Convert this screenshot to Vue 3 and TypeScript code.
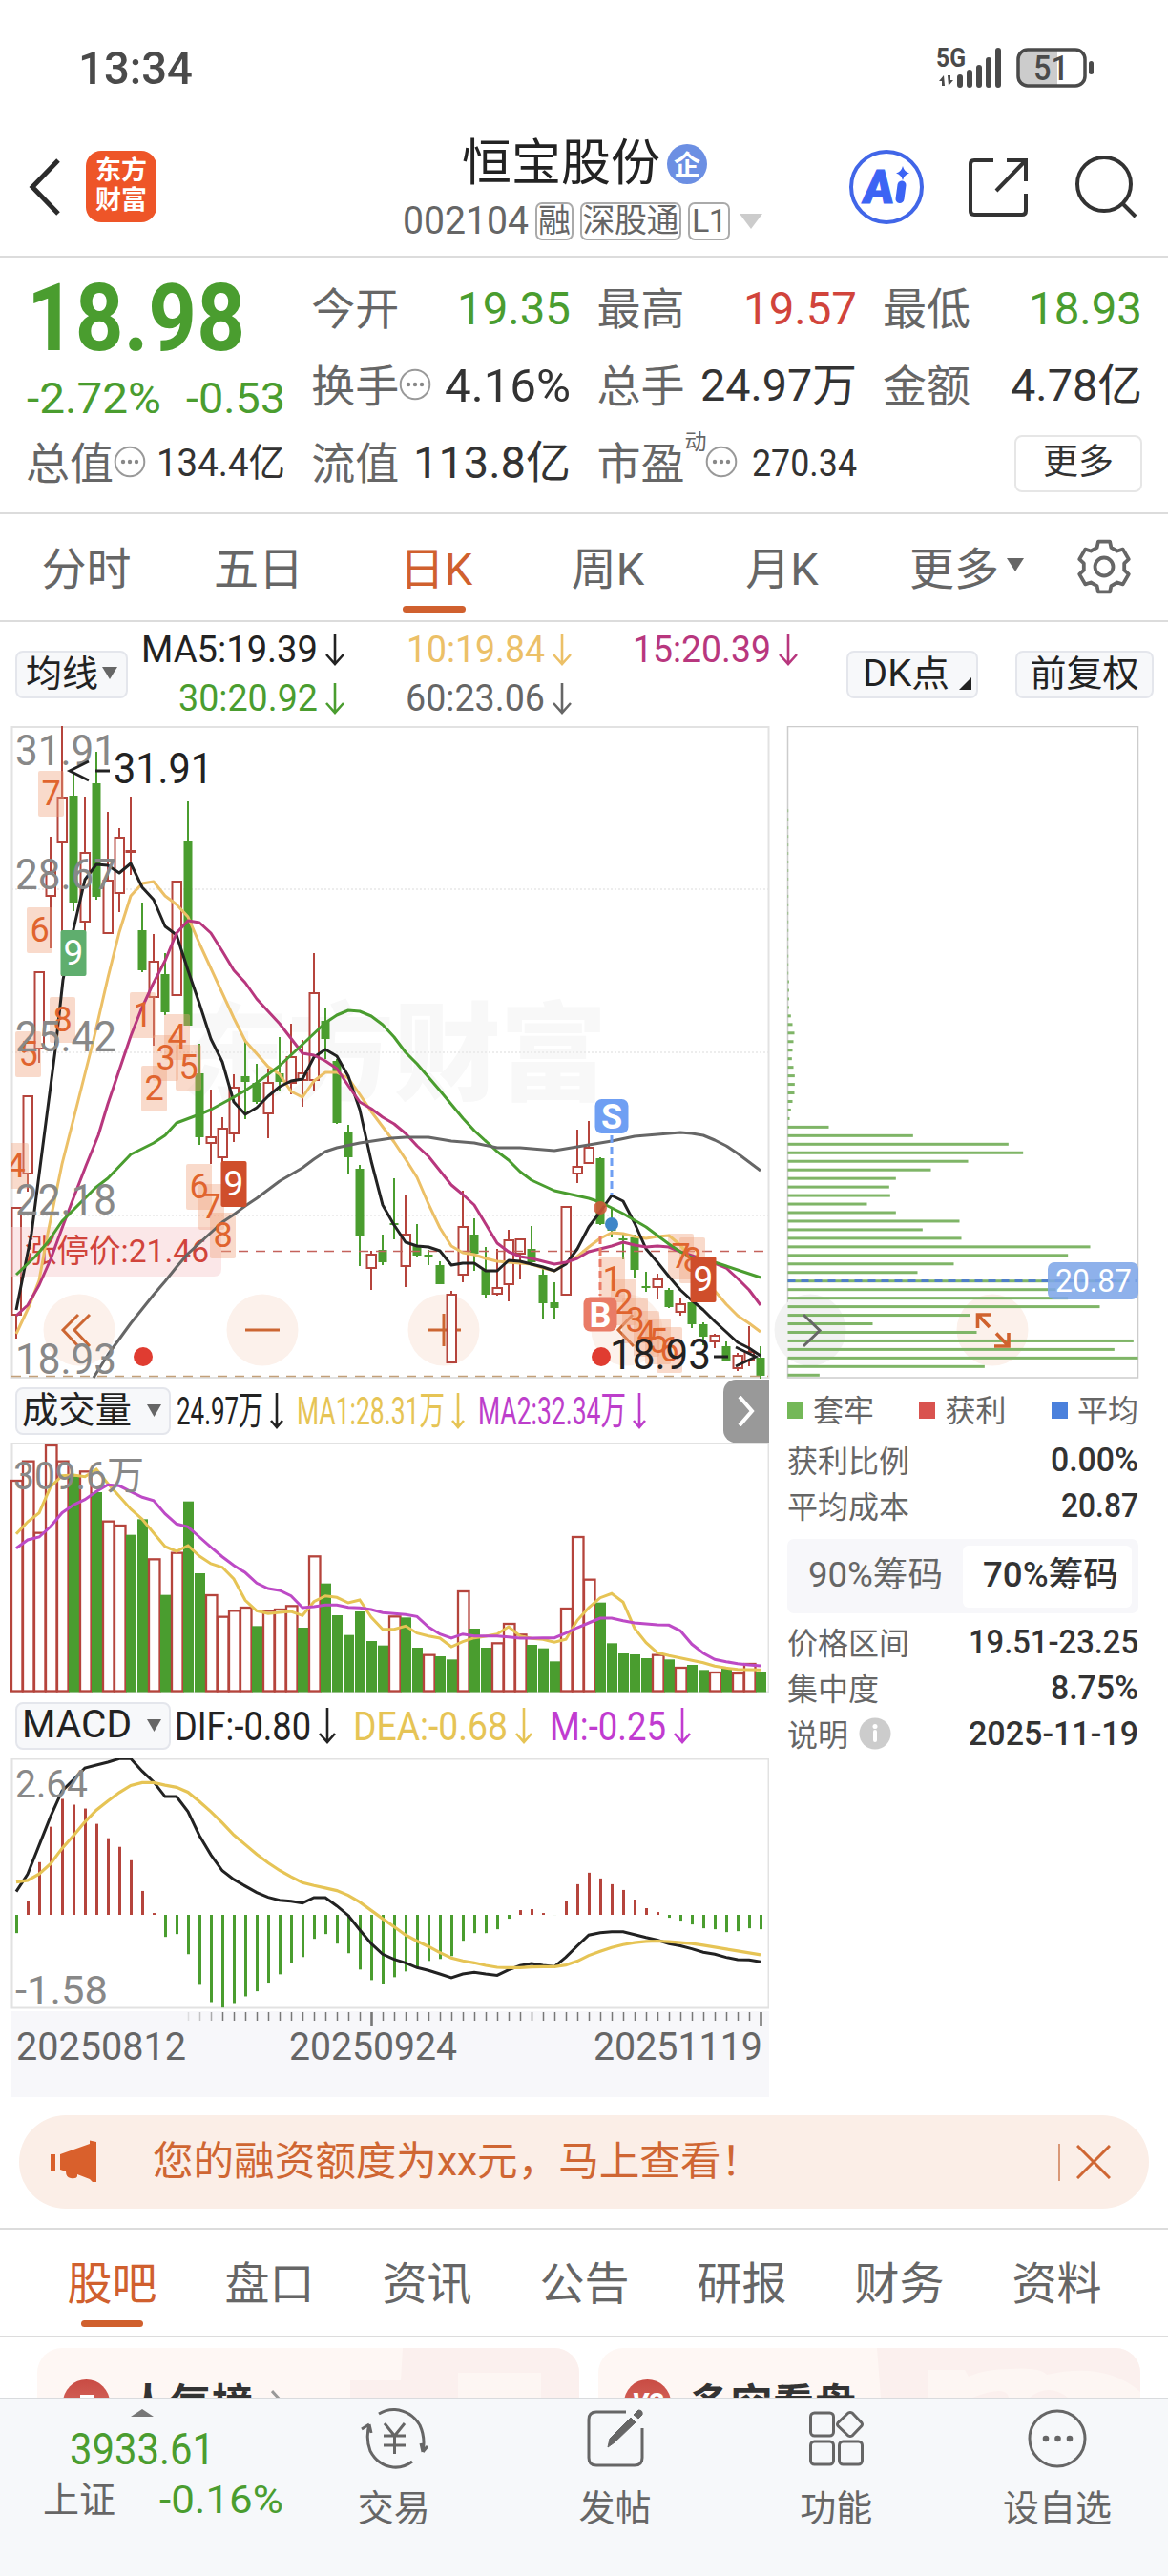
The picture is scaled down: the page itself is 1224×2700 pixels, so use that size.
<script setup lang="ts">
import { h } from 'vue'

const GREEN = '#4a9d2f'
const RED = '#b5443c'
const FONT = 'Roboto, "Noto Sans CJK SC", sans-serif'

interface FitProps { t: string; w: number; s: number; c?: string; b?: number | string }

// Single-line label whose advance width is fixed
const Fit = (p: FitProps) =>
  h('svg', { width: p.w, height: p.s, viewBox: `0 0 ${p.w} ${p.s}`, style: 'display:block;flex:none;overflow:visible' }, [
    h('text', {
      x: 0, y: p.s * 0.855 - 1, 'font-size': p.s, 'font-family': FONT, 'font-weight': p.b ?? 400,
      fill: p.c ?? '#222', textLength: p.w, lengthAdjust: 'spacingAndGlyphs',
    }, p.t),
  ])
Fit.props = ['t', 'w', 's', 'c', 'b']

const Arrow = (p: { c: string; w: number; h: number }) =>
  h('svg', { width: p.w, height: p.h, viewBox: `0 0 ${p.w} ${p.h}`, style: 'display:block;flex:none' }, [
    h('path', {
      d: `M${p.w / 2} 0V${p.h - 2}M1 ${p.h - p.w / 2 - 2}L${p.w / 2} ${p.h - 2}L${p.w - 1} ${p.h - p.w / 2 - 2}`,
      fill: 'none', stroke: p.c, 'stroke-width': 2.6,
    }),
  ])
Arrow.props = ['c', 'w', 'h']

const Dots = () =>
  h('svg', { width: 34, height: 34, viewBox: '0 0 34 34', style: 'display:block;flex:none' }, [
    h('circle', { cx: 17, cy: 17, r: 15.3, fill: 'none', stroke: '#999', 'stroke-width': 2 }),
    ...[10, 17, 24].map((x) => h('circle', { cx: x, cy: 17, r: 2.2, fill: '#888' })),
  ])

const cx = (i: number) => 17 + 12 * i
const pts = (a: number[], f: (v: number) => number) => a.map((v, i) => `${cx(i)},${f(v).toFixed(1)}`).join(' ')

// [up, high, bodyTop, bodyBottom, low]
const candles: number[][] = [
  [1, 1265, 1265, 1379, 1403], [1, 1148, 1148, 1231, 1249], [1, 1018, 1018, 1100, 1114], [1, 877, 913, 940, 994],
  [1, 761, 835, 884, 1023], [0, 810, 834, 946, 955], [1, 835, 893, 967, 976], [0, 788, 821, 940, 943],
  [1, 851, 922, 979, 979], [1, 868, 877, 937, 956], [1, 835, 891, 893, 917], [0, 946, 975, 1017, 1019],
  [1, 979, 1007, 1046, 1096], [0, 999, 1021, 1061, 1064], [1, 923, 923, 1044, 1044], [0, 840, 882, 1075, 1075],
  [0, 1094, 1125, 1192, 1200], [1, 1142, 1191, 1199, 1220], [1, 1171, 1182, 1214, 1218], [1, 1126, 1139, 1189, 1197],
  [0, 1089, 1128, 1134, 1173], [0, 1115, 1135, 1155, 1157], [1, 1120, 1134, 1168, 1193], [0, 1087, 1125, 1134, 1143],
  [1, 1073, 1107, 1136, 1147], [1, 1090, 1124, 1133, 1160], [1, 999, 1040, 1133, 1143], [0, 1057, 1070, 1089, 1110],
  [0, 1110, 1112, 1177, 1178], [0, 1179, 1187, 1213, 1230], [0, 1221, 1225, 1296, 1327], [1, 1311, 1314, 1330, 1352],
  [0, 1294, 1310, 1323, 1326], [0, 1235, 1282, 1284, 1299], [1, 1253, 1293, 1328, 1349], [0, 1283, 1305, 1316, 1318],
  [0, 1310, 1315, 1317, 1326], [0, 1322, 1326, 1346, 1346], [1, 1353, 1356, 1429, 1429], [1, 1248, 1285, 1337, 1344],
  [0, 1277, 1294, 1314, 1332], [0, 1307, 1331, 1357, 1361], [1, 1309, 1349, 1357, 1358], [1, 1289, 1299, 1347, 1364],
  [1, 1298, 1298, 1315, 1341], [0, 1285, 1309, 1323, 1327], [0, 1330, 1336, 1366, 1383], [0, 1344, 1365, 1371, 1382],
  [1, 1264, 1264, 1358, 1358], [1, 1184, 1222, 1231, 1240], [1, 1175, 1202, 1220, 1220], [0, 1213, 1214, 1283, 1284],
  [0, 1266, 1278, 1290, 1297], [0, 1293, 1298, 1300, 1320], [0, 1294, 1297, 1331, 1340], [0, 1333, 1348, 1350, 1354],
  [1, 1335, 1340, 1350, 1362], [0, 1350, 1352, 1370, 1371], [1, 1361, 1366, 1376, 1379], [0, 1365, 1365, 1388, 1392],
  [0, 1386, 1388, 1401, 1410], [1, 1398, 1399, 1407, 1413], [0, 1406, 1411, 1426, 1427], [1, 1418, 1420, 1435, 1437],
  [1, 1390, 1416, 1427, 1432], [0, 1411, 1423, 1442, 1445],
]

const maLines = [
  { c: '#ecc067', p: '17,1398 31,1368 41,1342 50,1293 65,1220 77,1173 98,1090 113,1025 125,977 137,939 149,926 161,924 173,939 185,948 197,961 209,989 221,1015 245,1067 257,1091 273,1109 281,1118 293,1126 305,1144 317,1150 329,1133 341,1124 353,1124 365,1130 377,1147 389,1165 401,1181 413,1197 425,1215 437,1234 449,1262 461,1287 473,1306 485,1313 497,1315 509,1319 521,1322 545,1324 557,1325 569,1329 581,1332 593,1324 605,1317 617,1307 629,1298 641,1292 653,1293 665,1296 677,1298 689,1296 701,1295 713,1305 737,1337 749,1353 761,1367 773,1379 785,1387 797,1396' },
  { c: '#222', p: '17,1373 33,1293 45,1200 58,1100 66,1027 77,974 89,922 101,906 113,907 125,915 137,905 149,930 161,943 173,971 185,980 197,1017 209,1052 221,1089 233,1113 245,1155 257,1168 269,1161 281,1149 293,1139 305,1133 317,1131 329,1108 341,1100 353,1107 365,1128 377,1163 389,1217 401,1263 413,1284 425,1302 437,1306 449,1307 461,1311 473,1326 485,1324 497,1324 509,1332 521,1332 533,1321 545,1322 557,1325 569,1328 581,1332 593,1325 605,1309 617,1286 629,1270 641,1253 653,1259 665,1282 677,1309 689,1323 701,1338 713,1352 725,1363 737,1373 749,1385 761,1396 773,1407 785,1413 797,1421' },
  { c: '#b8377e', p: '17,1379 29,1368 41,1347 53,1320 67,1282 78,1253 90,1222 103,1190 113,1157 137,1086 148,1058 160,1032 173,1007 185,978 197,965 209,967 221,978 233,997 245,1017 257,1030 269,1047 293,1073 317,1104 329,1106 341,1112 353,1120 365,1138 377,1155 389,1162 401,1171 413,1178 425,1188 437,1201 449,1212 461,1227 473,1242 485,1252 497,1263 509,1283 521,1303 533,1312 545,1317 557,1319 581,1325 593,1323 605,1319 617,1312 629,1309 641,1306 653,1302 665,1305 677,1307 689,1306 701,1307 713,1312 749,1324 761,1329 773,1340 785,1352 797,1368' },
  { c: '#4a9d2f', p: '17,1336 37,1317 50,1302 65,1280 100,1245 113,1235 137,1210 161,1198 173,1190 185,1177 209,1168 221,1163 245,1150 257,1143 269,1135 293,1117 322,1090 341,1072 353,1064 365,1059 377,1060 389,1065 401,1074 413,1087 425,1103 437,1115 461,1143 485,1172 497,1185 521,1207 533,1216 545,1228 557,1237 581,1248 617,1256 629,1260 653,1272 677,1286 701,1304 713,1312 725,1318 749,1323 761,1327 797,1339' },
  { c: '#666', p: '98,1444 113,1420 137,1387 161,1357 173,1343 185,1328 197,1314 209,1303 221,1292 233,1281 245,1273 257,1264 269,1256 293,1238 305,1231 317,1224 329,1215 341,1207 353,1203 377,1198 410,1193 425,1192 449,1192 461,1194 473,1196 497,1198 521,1203 545,1203 557,1204 581,1206 593,1204 617,1200 641,1196 665,1191 689,1189 713,1187 725,1188 737,1190 749,1195 761,1201 773,1209 785,1218 797,1227' },
]

// [digit, x, y]
const marks: [string, number, number][] = [
  ['4', 3, 1198], ['5', 16, 1081], ['6', 28, 951], ['7', 40, 808], ['8', 52, 1045], ['1', 136, 1040], ['2', 148, 1117],
  ['3', 160, 1085], ['4', 172, 1063], ['5', 184, 1095], ['6', 195, 1220], ['7', 208, 1241], ['8', 220, 1271],
  ['1', 628, 1317], ['2', 640, 1341], ['3', 652, 1360], ['4', 664, 1374], ['5', 676, 1382], ['6', 688, 1391],
  ['7', 700, 1293], ['8', 712, 1297],
]
const nines = [
  { x: 63.5, y: 975, c: '#5fae6e' }, { x: 231.5, y: 1217, c: '#cf4e2b' }, { x: 723.5, y: 1317, c: '#cf4e2b' },
]
const axis = [['31.91', 802], ['28.67', 932], ['25.42', 1102], ['22.18', 1273], ['18.93', 1440]] as const

const chipEnds = [
  81, 81, 81, 81, 87, 92, 98, 95, 92, 90, 95, 99, 99, 98, 92, 87, 83,
  206, 471, 771, 817, 644, 527, 417, 396, 399, 326, 417, 617, 501, 623, 1028, 958, 599, 485, 1140, 920, 958, 1058, 651, 344, 671, 1164, 1104, 1178, 696, 177,
]
const chips = [...Array(20).fill(79), ...chipEnds].map((v: number, k, a) => ({
  y: 1441.3 - (a.length - 1 - k) * 8.963, w: (v - 77) / 3,
}))

const vTop = [333, 272, 497, 222, 272, 322, 304, 372, 461, 474, 506, 457, 580, 695, 560, 401, 627, 693, 761, 742, 732, 793, 742, 738, 727, 798, 571, 659, 759, 821, 747, 840, 854, 760, 766, 861, 881, 888, 898, 681, 801, 861, 844, 783, 817, 852, 863, 904, 735, 510, 644, 719, 847, 879, 882, 894, 881, 898, 921, 915, 931, 936, 925, 939, 909, 939]
const redVol = new Set([0, 1, 2, 3, 4, 6, 8, 9, 12, 14, 17, 18, 19, 20, 22, 23, 24, 26, 33, 36, 39, 42, 43, 44, 48, 49, 50, 56, 58, 61, 63, 64])
const vols = vTop.map((v, i) => ({ y: 1440 + v / 3, up: redVol.has(i), x: cx(i) }))
const vy = (v: number) => 1440 + v / 3
const vma1 = pts([503, 465, 437, 355, 320, 318, 323, 300, 345, 385, 425, 457, 500, 543, 558, 540, 573, 597, 608, 645, 712, 745, 754, 750, 747, 760, 716, 698, 703, 720, 711, 765, 803, 803, 793, 815, 824, 831, 858, 842, 830, 825, 818, 795, 824, 832, 835, 844, 835, 775, 735, 704, 691, 718, 800, 845, 877, 886, 893, 901, 908, 919, 925, 929, 930, 931], vy)
const vma2 = pts([548, 522, 513, 480, 437, 412, 395, 370, 349, 352, 370, 388, 398, 440, 472, 481, 513, 545, 575, 602, 625, 658, 675, 681, 698, 735, 732, 727, 727, 734, 736, 741, 751, 754, 757, 763, 796, 818, 831, 818, 824, 824, 824, 827, 831, 831, 830, 830, 815, 798, 783, 768, 768, 776, 783, 786, 789, 790, 808, 850, 878, 898, 905, 911, 915, 918], vy)

const my = (v: number) => 1780 + v / 2.986
const macd = [735, 633, 513, 402, 315, 333, 345, 393, 438, 465, 507, 603, 672, 747, 738, 801, 897, 951, 968, 954, 933, 917, 890, 864, 830, 810, 753, 738, 768, 798, 849, 882, 893, 873, 855, 840, 822, 816, 807, 759, 735, 735, 723, 690, 663, 660, 672, 678, 633, 582, 546, 564, 582, 600, 630, 657, 669, 687, 696, 708, 720, 723, 732, 729, 720, 723]
const dif = pts([605, 550, 460, 370, 290, 255, 218, 209, 200, 189, 189, 228, 262, 308, 308, 355, 430, 490, 540, 567, 588, 608, 623, 632, 635, 641, 624, 624, 650, 680, 725, 768, 801, 817, 828, 843, 852, 863, 875, 863, 858, 863, 867, 850, 837, 830, 836, 840, 810, 775, 741, 734, 731, 731, 740, 749, 757, 768, 775, 784, 795, 801, 811, 818, 819, 825], my)
const dea = pts([575, 570, 550, 518, 470, 430, 387, 350, 322, 295, 273, 264, 264, 272, 279, 294, 323, 355, 390, 428, 458, 488, 515, 539, 559, 577, 586, 594, 602, 617, 638, 664, 690, 715, 741, 760, 777, 796, 813, 822, 828, 836, 842, 843, 843, 841, 840, 840, 835, 823, 805, 792, 780, 771, 765, 761, 760, 762, 765, 768, 773, 779, 785, 791, 797, 803], my)
const ticks = Array.from({ length: 51 }, (_, k) => k + 15)

const gear = (() => {
  const p: string[] = []
  for (let k = 0; k < 6; k++) {
    for (const [d, r] of [[-13, 27], [13, 27], [20, 21.5], [40, 21.5]]) {
      const a = ((-90 + 60 * k + d) * Math.PI) / 180
      p.push(`${(30 + r * Math.cos(a)).toFixed(1)},${(30 + r * Math.sin(a)).toFixed(1)}`)
    }
  }
  return p.join(' ')
})()

const periods = ['分时', '五日', '日K', '周K', '月K']
const sections = ['股吧', '盘口', '资讯', '公告', '研报', '财务', '资料']
const mas = [
  { t: 'MA5:19.39', w: 185, c: '#222' }, { t: '10:19.84', w: 145, c: '#ecc067' }, { t: '15:20.39', w: 145, c: '#b8377e' },
  { t: '30:20.92', w: 146, c: '#4a9d2f' }, { t: '60:23.06', w: 146, c: '#666' },
]
</script>

<template>
  <div class="page">
    <div class="status">
      <Fit t="13:34" :w="120" :s="49" c="#4a4a4a" :b="500" />
      <svg width="168" height="46" viewBox="980 48 168 46">
        <text x="981" y="70" font-size="28" font-weight="700" textLength="31" lengthAdjust="spacingAndGlyphs" fill="#4a4a4a" class="num">5G</text>
        <path d="M989 79l-5 6h3v5h3zM994 90l5-6h-3v-5h-3z" fill="#4a4a4a" />
        <path d="M1006 81v8M1016 76v13M1026 71v18M1036 63v26M1046 53v36" stroke="#4a4a4a" stroke-width="6" stroke-linecap="round" />
        <path d="M1075 52h33v38h-33q-9 0-9-9v-20q0-9 9-9z" fill="#ccc" />
        <rect x="1067" y="52" width="70" height="38" rx="10" fill="none" stroke="#4a4a4a" stroke-width="3.5" />
        <rect x="1141" y="64" width="5" height="14" rx="2.5" fill="#4a4a4a" />
        <text x="1083" y="84" font-size="37" font-weight="500" textLength="37" lengthAdjust="spacingAndGlyphs" fill="#4a4a4a" class="num">51</text>
      </svg>
    </div>

    <header class="top">
      <svg class="back" width="40" height="64" viewBox="0 0 40 64"><path d="M33 4L6 32L33 60" fill="none" stroke="#2b2b2b" stroke-width="5" /></svg>
      <div class="logo"><span>东方</span><span>财富</span></div>
      <div class="title">
        <div class="name">恒宝股份<i>企</i></div>
        <div class="code">
          <Fit t="002104" :w="132" :s="41" c="#666" />
          <b>融</b><b>深股通</b><b>L1</b>
          <svg width="24" height="16" viewBox="0 0 24 16"><path d="M0 0h24L12 16z" fill="#ccc" /></svg>
        </div>
      </div>
      <svg class="acts" width="310" height="80" viewBox="886 156 310 80">
        <circle cx="929" cy="196" r="37" fill="#fff" stroke="#4166e8" stroke-width="4" />
        <text transform="translate(903 213) skewX(-6)" font-size="49" font-weight="900" fill="#3c64f4" stroke="#3c64f4" stroke-width="1.2" textLength="32" lengthAdjust="spacingAndGlyphs" class="num">A</text>
        <path d="M945 194l-2 14.500" stroke="#3c64f4" stroke-width="9" stroke-linecap="round" />
        <path d="M946 174q1.500 6 7 7.500q-5.500 1.500-7 7.500q-1.500-6-7-7.500q5.500-1.500 7-7.500z" fill="#3c64f4" />
        <path d="M1041 168h-20q-4 0-4 4v49q0 4 4 4h50q4 0 4-4v-18M1055 168h20v22M1075 168L1044 200" fill="none" stroke="#333" stroke-width="4" />
        <circle cx="1157" cy="193" r="28" fill="none" stroke="#333" stroke-width="4" />
        <path d="M1176 213l14 14" stroke="#333" stroke-width="4" />
      </svg>
    </header>

    <section class="quote">
      <div class="last">
        <div class="big"><Fit t="18.98" :w="229" :s="99" :c="GREEN" :b="700" /></div>
        <div class="chg"><Fit t="-2.72%" :w="141" :s="44" :c="GREEN" /><Fit t="-0.53" :w="104" :s="44" :c="GREEN" /></div>
      </div>
      <div class="cell"><span>今开</span><Fit t="19.35" :w="119" :s="48" :c="GREEN" /></div>
      <div class="cell"><span>最高</span><Fit t="19.57" :w="119" :s="48" c="#d1443b" /></div>
      <div class="cell"><span>最低</span><Fit t="18.93" :w="119" :s="48" :c="GREEN" /></div>
      <div class="cell"><span>换手</span><Dots class="dots" /><Fit t="4.16%" :w="132" :s="48" c="#333" /></div>
      <div class="cell"><span>总手</span><Fit t="24.97万" :w="164" :s="47" c="#333" /></div>
      <div class="cell"><span>金额</span><Fit t="4.78亿" :w="138" :s="47" c="#333" /></div>
      <div class="cell"><span>总值</span><Dots class="dots" /><Fit t="134.4亿" :w="135" :s="40" c="#333" /></div>
      <div class="cell"><span>流值</span><Fit t="113.8亿" :w="165" :s="47" c="#333" /></div>
      <div class="cell"><span>市盈</span><small>动</small><Dots class="dots" /><Fit t="270.34" :w="110" :s="38" c="#333" /></div>
      <div class="cell"><div class="more">更多</div></div>
    </section>

    <nav class="periods">
      <div v-for="p in periods" :key="p" :class="{ on: p === '日K' }">{{ p }}</div>
      <div>更多<svg width="18" height="14" viewBox="0 0 18 14"><path d="M0 0h18L9 14z" fill="#666" /></svg></div>
      <div>
        <svg width="60" height="60" viewBox="0 0 60 60" fill="none" stroke="#666" stroke-width="3.8" stroke-linejoin="round">
          <polygon :points="gear" /><circle cx="30" cy="30" r="9.500" />
        </svg>
      </div>
    </nav>

    <div class="maRow">
      <div class="pill a">均线<svg width="16" height="13" viewBox="0 0 16 13"><path d="M0 0h16L8 13z" fill="#666" /></svg></div>
      <div class="mas">
        <div v-for="m in mas" :key="m.t"><Fit :t="m.t" :w="m.w" :s="39" :c="m.c" /><Arrow :c="m.c" :w="20" :h="33" /></div>
      </div>
      <div class="pill b"><Fit t="DK点" :w="91" :s="38" /><svg width="13" height="13" viewBox="0 0 13 13"><path d="M13 0v13H0z" fill="#222" /></svg></div>
      <div class="pill c">前复权</div>
    </div>

    <svg class="chart num" width="1224" height="685" viewBox="0 761 1224 685">
      <defs><clipPath id="kc"><rect x="12" y="761" width="794" height="685" /></clipPath></defs>
      <text x="190" y="1145" font-size="112" font-weight="900" fill="#f8f8f8" textLength="446">东方财富</text>
      <g fill="none" stroke="#e8e8e8" stroke-width="1.500" stroke-dasharray="2 2"><path d="M12 932H805M12 1103H805M12 1274H805" /></g>
      <rect x="12.500" y="762" width="793" height="682" fill="none" stroke="#e2e2e2" stroke-width="2" />
      <g fill="#fcf1eb"><circle v-for="x in [83, 275, 465, 657]" :key="x" :cx="x" cy="1394" r="37.500" /></g>
      <g fill="none" stroke="#cc6632" stroke-width="3">
        <path d="M82 1378L66 1394L82 1411M94 1378L78 1394L94 1411M257 1394H293M448 1394H483M465 1377V1411M663 1378L648 1394L664 1411" />
      </g>
      <g clip-path="url(#kc)">
        <g v-for="(k, i) in candles" :key="i">
          <template v-if="k[0]">
            <path :d="`M${cx(i)} ${k[1]}V${k[2]}M${cx(i)} ${k[3]}V${k[4]}`" :stroke="RED" stroke-width="2" />
            <rect :x="cx(i) - 4.500" :y="k[2] + 1" width="9.500" :height="Math.max(1, k[3] - k[2] - 2)" fill="#fff" :stroke="RED" stroke-width="2" />
          </template>
          <template v-else>
            <path :d="`M${cx(i)} ${k[1]}V${k[4]}`" :stroke="GREEN" stroke-width="2" />
            <rect :x="cx(i) - 4.500" :y="k[2]" width="9" :height="k[3] - k[2]" :fill="GREEN" />
          </template>
        </g>
        <path d="M12 1286H224q8 0 8 8v36q0 8-8 8H12z" fill="#f6c9cd" opacity="0.45" />
        <path d="M232 1311.500H805" stroke="#c4625b" stroke-width="1.500" stroke-dasharray="10 8" />
        <path d="M12 1442.500H805" stroke="#c3a079" stroke-width="1.500" stroke-dasharray="10 8" />
        <text x="26" y="1323" font-size="34" fill="#d1443b" textLength="193" lengthAdjust="spacingAndGlyphs">涨停价:21.46</text>
        <g v-for="(m, i) in marks" :key="'m' + i">
          <rect :x="m[1]" :y="m[2]" width="27" height="48" rx="2" fill="#f0a27c" opacity="0.4" />
        </g>
        <polyline v-for="l in maLines" :key="l.c" :points="l.p" fill="none" :stroke="l.c" stroke-width="3" stroke-linejoin="round" />
        <text v-for="(m, i) in marks" :key="'t' + i" :x="m[1] + 13.500" :y="m[2] + 36" font-size="36" fill="#e0642e" text-anchor="middle">{{ m[0] }}</text>
      </g>
      <g v-for="n in nines" :key="n.x">
        <rect :x="n.x" :y="n.y" width="27" height="48" rx="2" :fill="n.c" />
        <text :x="n.x + 13.500" :y="n.y + 36" font-size="37" fill="#fff" text-anchor="middle">9</text>
      </g>
      <g fill="#888" font-size="44">
        <text v-for="a in axis" :key="a[0]" x="16" :y="a[1]" textLength="106" lengthAdjust="spacingAndGlyphs">{{ a[0] }}</text>
      </g>
      <path d="M641 1190V1253" stroke="#6f9ff3" stroke-width="3" stroke-dasharray="8 4" />
      <path d="M629 1296V1358" stroke="#e97b66" stroke-width="3" stroke-dasharray="8 4" />
      <circle cx="629" cy="1266" r="7" fill="#d3573a" opacity="0.850" /><circle cx="641" cy="1283" r="7" fill="#3f86c8" />
      <rect x="623.500" y="1152" width="35" height="36" rx="7" fill="#6f9ff3" />
      <text x="641" y="1183" font-size="36" font-weight="700" fill="#fff" text-anchor="middle">S</text>
      <rect x="611.500" y="1359.500" width="35" height="36" rx="7" fill="#e97b66" />
      <text x="629" y="1391" font-size="36" font-weight="700" fill="#fff" text-anchor="middle">B</text>
      <circle cx="150" cy="1422" r="10" fill="#e03c31" /><circle cx="630" cy="1422" r="10" fill="#e03c31" />
      <g fill="#222" font-size="44">
        <text x="119" y="821" textLength="104" lengthAdjust="spacingAndGlyphs">31.91</text>
        <text x="639" y="1435" textLength="106" lengthAdjust="spacingAndGlyphs">18.93</text>
      </g>
      <path d="M93 798L73 808L93 818M100 808H115M748 1422H763M771 1412L792 1422L771 1432" fill="none" stroke="#222" stroke-width="2.800" />

      <rect x="825.500" y="761.500" width="367" height="682.500" fill="none" stroke="#ccc" stroke-width="1.500" />
      <circle cx="849" cy="1394" r="37.500" fill="#f2f2f2" /><circle cx="1040" cy="1394" r="37.500" fill="#fcf1eb" />
      <rect v-for="b in chips" :key="b.y" x="825.500" :y="b.y - 1.500" :width="b.w" height="3" fill="#7fb567" />
      <path d="M825.500 1342.500H1192" stroke="#4f7fc8" stroke-width="3" stroke-dasharray="8 6" />
      <rect x="1098" y="1323" width="95" height="39" rx="7" fill="#7ea6e8" opacity="0.880" />
      <text x="1106" y="1354" font-size="33" fill="#fff" textLength="80" lengthAdjust="spacingAndGlyphs">20.87</text>
      <path d="M842 1378L859 1394.500L842 1411" fill="none" stroke="#666" stroke-width="3" />
      <path d="M1024.500 1392V1378H1039M1025 1378.500L1037 1391M1042 1411H1057V1397M1056 1410L1044 1397.500" fill="none" stroke="#d0622e" stroke-width="3.600" />
    </svg>

    <div class="lower">
      <div class="left">
        <div class="ind">
          <div class="pill d"><Fit t="成交量" :w="115" :s="38" /><svg width="15" height="13" viewBox="0 0 15 13"><path d="M0 0h15L7.500 13z" fill="#666" /></svg></div>
          <div class="vals">
            <div class="v1"><Fit t="24.97万" :w="91" :s="41" /><Arrow c="#222" :w="14" :h="38" /></div>
            <div class="v2"><Fit t="MA1:28.31万" :w="155" :s="41" c="#e6c455" /><Arrow c="#e6c455" :w="14" :h="38" /></div>
            <div class="v2"><Fit t="MA2:32.34万" :w="155" :s="41" c="#bd3ecb" /><Arrow c="#bd3ecb" :w="14" :h="38" /></div>
          </div>
          <div class="next"><svg width="18" height="32" viewBox="0 0 18 32"><path d="M2 1L15 16L2 31" fill="none" stroke="#fff" stroke-width="4" /></svg></div>
        </div>
        <svg class="chart num" width="806" height="263" viewBox="0 1512 806 263">
          <rect x="12.500" y="1513" width="793" height="260.500" fill="none" stroke="#e2e2e2" stroke-width="2" />
          <template v-for="b in vols" :key="b.x">
            <rect v-if="b.up" :x="b.x - 5" :y="b.y + 1" width="11.500" :height="1771.500 - b.y" fill="#fff" :stroke="RED" stroke-width="2.300" />
            <rect v-else :x="b.x - 5" :y="b.y" width="11" :height="1773.500 - b.y" :fill="GREEN" />
          </template>
          <polyline :points="vma1" fill="none" stroke="#e6c455" stroke-width="3" />
          <polyline :points="vma2" fill="none" stroke="#bd4ac6" stroke-width="3" />
          <text x="14" y="1561" font-size="41" fill="#888" textLength="137" lengthAdjust="spacingAndGlyphs">309.6万</text>
        </svg>
        <div class="ind two">
          <div class="pill d"><Fit t="MACD" :w="115" :s="40" /><svg width="15" height="13" viewBox="0 0 15 13"><path d="M0 0h15L7.500 13z" fill="#666" /></svg></div>
          <div class="vals m">
            <div class="v3"><Fit t="DIF:-0.80" :w="143" :s="43" /><Arrow c="#222" :w="18" :h="38" /></div>
            <div class="v3"><Fit t="DEA:-0.68" :w="162" :s="43" c="#e6c455" /><Arrow c="#e6c455" :w="18" :h="38" /></div>
            <div class="v3"><Fit t="M:-0.25" :w="122" :s="43" c="#c13bd0" /><Arrow c="#c13bd0" :w="18" :h="38" /></div>
          </div>
        </div>
        <svg class="chart num" width="806" height="357" viewBox="0 1843 806 357">
          <rect x="12" y="2108" width="794" height="90" fill="#f7f7fa" />
          <rect x="12.500" y="1843.500" width="793" height="261" fill="none" stroke="#e2e2e2" stroke-width="2" />
          <path v-for="(v, i) in macd" :key="i" :d="`M${cx(i) + 0.5} 2007V${my(v)}`" :stroke="v < 678 ? RED : GREEN" stroke-width="3" />
          <polyline :points="dif" fill="none" stroke="#222" stroke-width="3" />
          <polyline :points="dea" fill="none" stroke="#e6c455" stroke-width="3.200" />
          <path v-for="i in ticks" :key="'k' + i" :d="`M${cx(i) + 0.5} 2109V${i === 31 || i === 65 ? 2124 : 2118}`" stroke="#777" :stroke-width="i === 31 || i === 65 ? 2.600 : 1.500" :opacity="i < 18 ? (i - 14) * 0.2 : 1" />
          <g fill="#888" font-size="40">
            <text x="16" y="1884" textLength="76" lengthAdjust="spacingAndGlyphs">2.64</text>
            <text x="16" y="2100" textLength="97" lengthAdjust="spacingAndGlyphs">-1.58</text>
          </g>
          <g fill="#666" font-size="41">
            <text x="17" y="2159" textLength="178" lengthAdjust="spacingAndGlyphs">20250812</text>
            <text x="303" y="2159" textLength="176" lengthAdjust="spacingAndGlyphs">20250924</text>
            <text x="622" y="2159" textLength="177" lengthAdjust="spacingAndGlyphs">20251119</text>
          </g>
        </svg>
      </div>
      <aside class="side">
        <div class="legend">
          <span><i class="g"></i>套牢</span><span><i class="r"></i>获利</span><span><i class="b"></i>平均</span>
        </div>
        <div class="kv"><span>获利比例</span><Fit t="0.00%" :w="92" :s="35" c="#333" :b="500" /></div>
        <div class="kv"><span>平均成本</span><Fit t="20.87" :w="81" :s="35" c="#333" :b="500" /></div>
        <div class="toggle">
          <div><Fit t="90%筹码" :w="141" :s="36" c="#666" /></div>
          <div class="on"><Fit t="70%筹码" :w="142" :s="36" c="#333" :b="500" /></div>
        </div>
        <div class="kv"><span>价格区间</span><Fit t="19.51-23.25" :w="178" :s="35" c="#333" :b="500" /></div>
        <div class="kv"><span>集中度</span><Fit t="8.75%" :w="92" :s="35" c="#333" :b="500" /></div>
        <div class="kv">
          <span>说明</span>
          <svg class="info" width="34" height="34" viewBox="0 0 34 34"><circle cx="17" cy="17" r="16.500" fill="#ccc" /><circle cx="17" cy="9.500" r="2.500" fill="#fff" /><path d="M17 15v9" stroke="#fff" stroke-width="4" stroke-linecap="round" /></svg>
          <Fit t="2025-11-19" :w="178" :s="35" c="#333" :b="500" />
        </div>
      </aside>
    </div>

    <div class="banner">
      <svg width="52" height="46" viewBox="0 0 52 46" fill="#d9602c"><path d="M1 15h5v18H1zM11 15L42 4V0.500L49 2V44H45L42 41L29 36V38Q28 41 22 40Q17 39 17 33L11 31z" /></svg>
      <div class="msg"><Fit t="您的融资额度为xx元，马上查看！" :w="638" :s="42" c="#cf6633" /></div>
      <div class="bar"></div>
      <svg width="36" height="36" viewBox="0 0 36 36"><path d="M1 1L35 35M35 1L1 35" stroke="#cf6633" stroke-width="3" /></svg>
    </div>

    <nav class="sections">
      <div v-for="s in sections" :key="s" :class="{ on: s === '股吧' }">{{ s }}</div>
    </nav>

    <div class="cards">
      <div class="card">
        <svg class="deco" width="240" height="52" viewBox="0 0 240 52"><path d="M55 0H240V52H0V34H53z" fill="#fbf0ee" /><path d="M113 26H200V52H113z" fill="#fdf6f3" /></svg>
        <div class="ic"><svg width="50" height="50" viewBox="0 0 50 50"><path d="M18 16h14v24H18z" fill="#fff" /></svg></div>
        <span>人气榜</span>
        <svg class="go" width="12" height="22" viewBox="0 0 12 22"><path d="M1 1L10 11L1 21" fill="none" stroke="#999" stroke-width="3" /></svg>
      </div>
      <div class="card">
        <svg class="deco" width="276" height="52" viewBox="0 0 276 52"><path d="M0 0H276V52H4z" fill="#fbf0ee" /><path d="M53 52V23H92L96 30Q112 22 140 22Q170 20 178 28Q240 14 276 46V52H200Q180 36 160 52H138Q136 38 100 52z" fill="#fdf6f3" /></svg>
        <div class="ic"><em>VS</em></div>
        <span>多空看盘</span>
      </div>
    </div>

    <footer class="bottom">
      <div class="idx">
        <svg width="24" height="8" viewBox="0 0 24 8"><path d="M12 0L24 8H0z" fill="#777" /></svg>
        <div class="px"><Fit t="3933.61" :w="152" :s="46" :c="GREEN" /></div>
        <div class="line"><span>上证</span><Fit t="-0.16%" :w="130" :s="41" :c="GREEN" /></div>
      </div>
      <div class="item">
        <svg width="72" height="66" viewBox="377 2523 72 66" fill="none" stroke="#666" stroke-width="3">
          <path d="M397 2530Q405 2525 414 2525.500Q431 2527 440 2542Q446 2555 443 2570M443 2570l5-6M443 2570l-2-9M432 2580Q423 2587 412 2586Q396 2584 388 2569Q383 2556 387 2541M387 2541l-8 5M387 2541l2 9" />
          <path d="M403 2540l10.500 13L424 2540M402 2553h23M402 2563h23M413.500 2553v19" />
        </svg>交易
      </div>
      <div class="item">
        <svg width="72" height="66" viewBox="609 2523 72 66" fill="none" stroke="#666" stroke-width="3">
          <path d="M656 2528H625Q617 2528 617 2536V2576Q617 2584 625 2584H665Q673 2584 673 2576V2545" />
          <path d="M637 2565L639 2556L661 2534L666 2539L644 2560zM664 2531L669 2526Q674 2526 673 2531L669 2535z" fill="#666" stroke-width="1" />
        </svg>发帖
      </div>
      <div class="item">
        <svg width="72" height="66" viewBox="840 2523 72 66" fill="none" stroke="#666" stroke-width="3">
          <rect x="849.500" y="2529" width="24" height="24" rx="4" /><rect x="849.500" y="2559" width="24" height="24" rx="4" /><rect x="879.500" y="2559" width="24" height="24" rx="4" />
          <path d="M889 2529L878 2539.500Q877 2541 878 2542.500L889 2553Q891 2554 893 2553L903 2542.500Q904 2541 903 2539.500L893 2529Q891 2528 889 2529z" />
        </svg>功能
      </div>
      <div class="item">
        <svg width="72" height="66" viewBox="1071 2523 72 66"><circle cx="1107" cy="2556" r="29" fill="none" stroke="#666" stroke-width="3" /><circle v-for="x in [1095, 1107.5, 1120]" :key="x" :cx="x" cy="2556" r="3.300" fill="#666" /></svg>设自选
      </div>
    </footer>
  </div>
</template>

<style>
body { background: #fff; }
</style>

<style scoped>
.page, .page * { box-sizing: border-box; }
.page { width: 1224px; height: 2700px; overflow: hidden; background: #fff; color: #222; display: flex; flex-direction: column; font-family: Roboto, "Noto Sans CJK SC", sans-serif; }
.page > * { flex: none; }
.num { font-family: Roboto, "Noto Sans CJK SC", sans-serif; }
.chart { display: block; }
.status { height: 118px; padding: 24px 76px 0 82px; display: flex; justify-content: space-between; align-items: center; }
.top { height: 152px; border-bottom: 2px solid #dcdcdc; display: flex; align-items: center; padding: 5px 28px 0; }
.back { margin-right: 22px; }
.logo { width: 74px; height: 75px; border-radius: 16px; background: #ee5528; color: #fff; font-size: 27px; font-weight: 700; line-height: 31px; display: flex; flex-direction: column; align-items: center; justify-content: center; padding-bottom: 2px; }
.title { width: 400px; margin-left: 248px; height: 140px; display: flex; flex-direction: column; }
.name { margin: 9px 0 0 72px; height: 74px; font-size: 52px; line-height: 72px; display: flex; align-items: center; white-space: nowrap; }
.name i { width: 42px; height: 42px; border-radius: 50%; background: #6c8fe3; color: #fff; font: 700 28px/40px "Noto Sans CJK SC", sans-serif; text-align: center; margin-left: 7px; }
.code { display: flex; align-items: center; height: 44px; margin: 1px 0 0 10px; gap: 7px; }
.code b { height: 40px; border: 2px solid #aaa; border-radius: 7px; font-weight: 400; font-size: 34px; line-height: 34px; color: #666; padding: 0 1px; white-space: nowrap; letter-spacing: -0.5px; }
.code b:last-of-type { padding: 0 2px; }
.code svg:last-child { margin-left: 3px; }
.acts { margin-left: 74px; }

.quote { height: 269px; border-bottom: 2px solid #dcdcdc; padding: 13px 0 0 28px; display: grid; grid-template-columns: repeat(4, 271px); grid-template-rows: repeat(3, 81px); column-gap: 28.3px; }
.last { grid-row: span 2; }
.big { padding: 0; }
.chg { display: flex; justify-content: space-between; margin-top: 14px; }
.cell { display: flex; align-items: center; position: relative; }
.cell span { font-size: 46px; line-height: 60px; color: #666; white-space: nowrap; margin-left: -1px; }
.cell > svg:last-child { margin-left: auto; }
.cell .dots { margin-top: -3px; }
.cell small { font-size: 23px; color: #666; align-self: flex-start; line-height: 28px; margin: 5px -2px 0 0; }
.more { margin-left: auto; width: 134px; height: 60px; border: 2px solid #e6e6e6; border-radius: 8px; font-size: 37px; line-height: 54px; text-align: center; color: #333; }

.periods { height: 113px; border-bottom: 2px solid #dcdcdc; display: grid; grid-template-columns: 181px 180px 192px 168px 197px 190px 98px; font-size: 47px; color: #666; }
.periods div { display: flex; align-items: center; justify-content: center; gap: 8px; position: relative; padding-bottom: 5px; }
.periods div:last-child { padding-bottom: 1px; }
.periods .on, .sections .on { color: #d0602e; }
.periods .on::after { content: ""; position: absolute; width: 66px; height: 7px; border-radius: 4px; background: #d0602e; left: 61px; bottom: 8px; }

.maRow { height: 109px; display: flex; align-items: center; padding-left: 16px; }
.pill { height: 50px; border: 2px solid #e4e6ec; border-radius: 8px; background: #f7f8fa; display: flex; align-items: center; font-size: 38px; white-space: nowrap; line-height: 42px; padding-bottom: 2px; }
.a { width: 118px; padding-left: 9px; gap: 4px; }
.mas { display: grid; grid-template-columns: 227px 238px 237px; grid-template-rows: 51px 51px; }
.mas div { display: flex; justify-content: flex-end; align-items: center; gap: 8px; }
.b { width: 138px; margin-left: 51px; padding-left: 15px; gap: 10px; }
.b svg:last-child { margin-top: 21px; }
.c { width: 145px; margin-left: 39px; justify-content: center; }

.lower { display: grid; grid-template-columns: 806px 387px; height: 754px; }
.ind { height: 66px; display: flex; align-items: center; padding-left: 16px; }
.ind.two { height: 68px; }
.d { width: 163px; padding-left: 5px; justify-content: space-between; padding-right: 8px; }
.vals { display: flex; gap: 14px; margin-left: 6px; }
.vals.m { gap: 18px; margin-left: 4px; }
.vals div { display: flex; align-items: center; gap: 7px; }
.vals.m div { gap: 8px; }
.next { width: 48px; height: 66px; margin-left: auto; background: #999; border-radius: 13px 0 0 13px; display: flex; align-items: center; justify-content: center; }

.side { padding: 0 0 0 19px; }
.legend { height: 60px; display: flex; justify-content: space-between; font-size: 32px; color: #666; }
.legend span { display: flex; align-items: center; }
.legend i { width: 17px; height: 17px; margin-right: 10px; margin-top: 4px; }
.legend .g { background: #74b858; }
.legend .r { background: #d9534f; }
.legend .b { background: #4a80dc; margin-left: 0; }
.kv { height: 48px; display: flex; align-items: center; justify-content: space-between; font-size: 32px; color: #666; }
.kv span { margin-top: -2px; }
.info { margin: 0 auto 0 11px; }
.toggle { height: 78px; margin: 11px 0 6px; background: #f7f7fa; border-radius: 7px; display: flex; align-items: center; padding-right: 7px; }
.toggle div { display: flex; justify-content: center; align-items: center; width: 184px; height: 65px; padding-bottom: 2px; }
.toggle .on { width: 177px; background: #fff; border-radius: 6px; padding-left: 6px; }

.banner { margin: 17px 20px 20px; height: 98px; border-radius: 49px; background: #fbeee7; display: flex; align-items: center; padding: 0 40px 0 32px; }
.msg { margin-left: 56px; }
.bar { margin-left: auto; margin-right: 17px; width: 2px; height: 39px; background: #d99877; }
.sections { height: 115px; border-top: 2px solid #dcdcdc; border-bottom: 2px solid #dcdcdc; padding: 0 34px 0 35px; display: grid; grid-template-columns: repeat(7, 165px); font-size: 47px; color: #666; }
.sections div { display: flex; align-items: center; justify-content: center; position: relative; padding-bottom: 6px; }
.sections .on::after { content: ""; position: absolute; width: 65px; height: 7px; border-radius: 4px; background: #d0602e; left: 50px; bottom: 9px; }
.cards { height: 63px; padding: 11px 29px 0 39px; display: flex; gap: 20px; overflow: hidden; }
.card { width: 568px; height: 120px; border-radius: 26px; background: #fef7f4; position: relative; overflow: hidden; padding: 33px 0 0 27px; display: flex; gap: 19px; }
.card > span { font-size: 43px; line-height: 52px; font-weight: 700; color: #333; letter-spacing: 1px; z-index: 1; }
.ic { width: 49px; height: 49px; border-radius: 50%; background: linear-gradient(#c94b43, #d9776c); flex: none; color: #fff; text-align: center; }
.ic em { font-size: 26px; font-weight: 900; line-height: 46px; }
.go { margin: 11px 0 0 -1px; }
.deco { position: absolute; right: 0; top: 0; }

.bottom { height: 187px; background: #f6f8fa; border-top: 2px solid #d9dbde; display: grid; grid-template-columns: 297px repeat(4, 231.75px); z-index: 1; }
.idx { display: flex; flex-direction: column; align-items: center; padding-top: 10px; }
.px { margin-top: 12px; }
.line { display: flex; align-items: center; justify-content: space-between; width: 252px; margin: 1px 0 0 45px; font-size: 38px; color: #666; line-height: 56px; }
.item { display: flex; flex-direction: column; align-items: center; padding-top: 8px; font-size: 38px; line-height: 80px; color: #666; }
</style>
